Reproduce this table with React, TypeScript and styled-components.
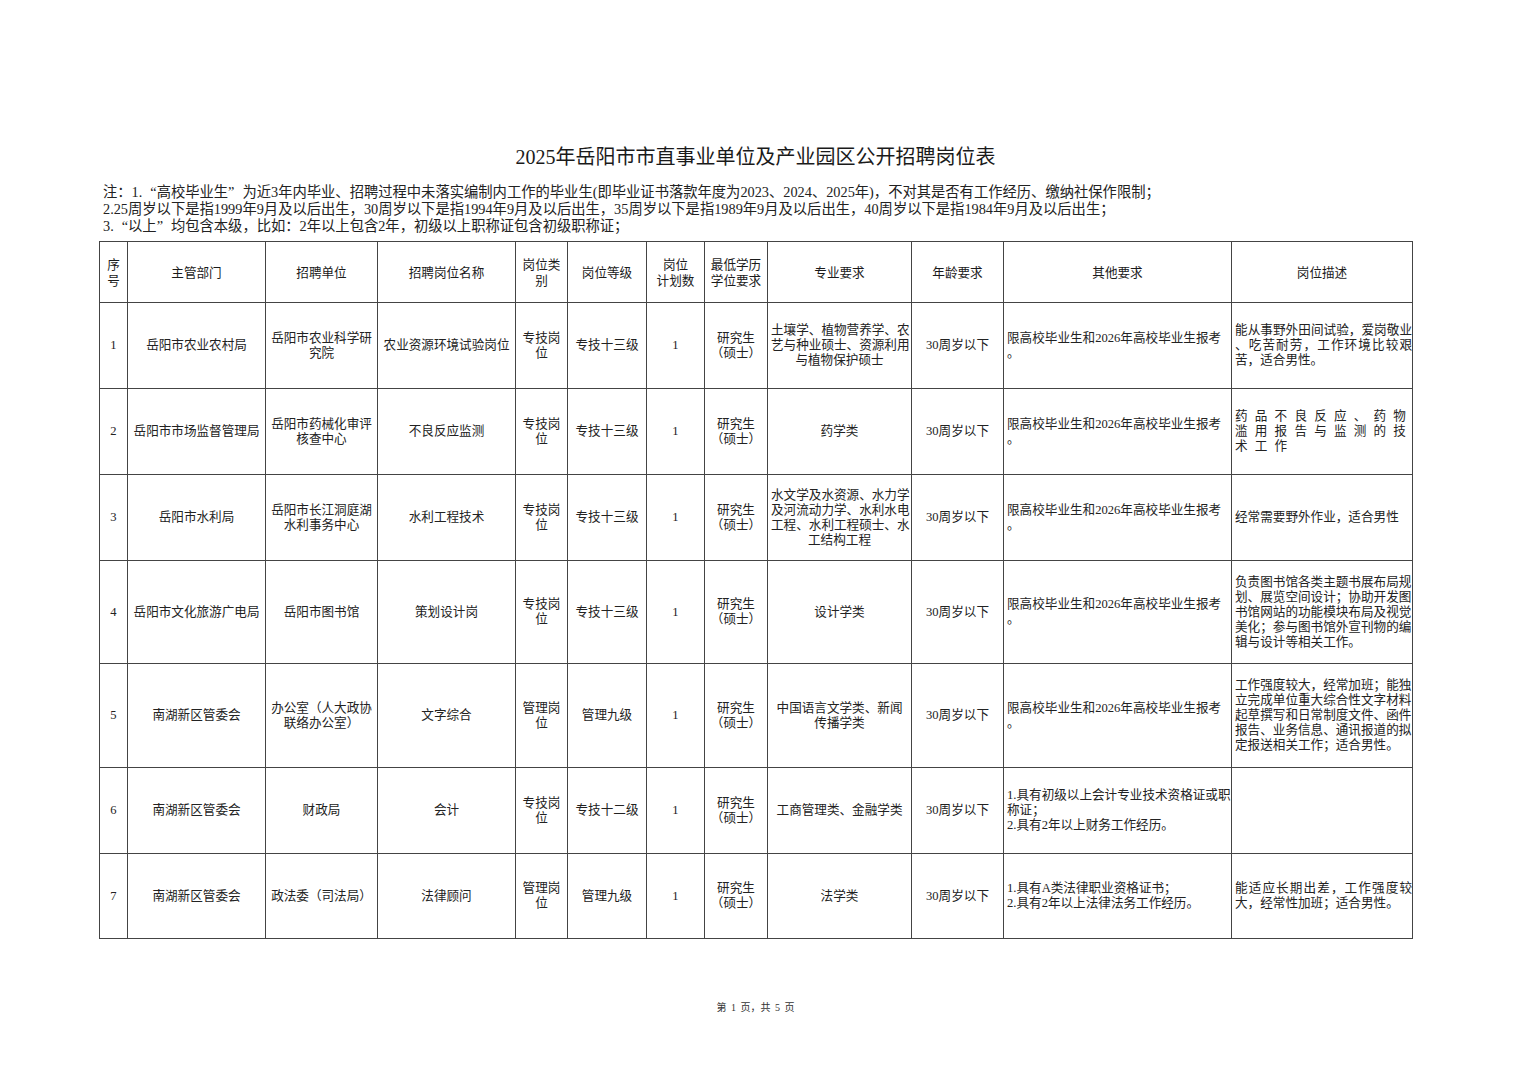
import React from 'react';
import styled, { createGlobalStyle } from 'styled-components';

const GlobalStyle = createGlobalStyle`
  html, body {
    margin: 0;
    padding: 0;
    background: #fff;
  }
  body {
    font-family: "Liberation Serif", "Noto Sans CJK SC", serif;
    color: #222;
  }
`;

const Page = styled.div`
  width: 1528px;
  min-height: 1080px;
  padding: 145px 0 0 99px;
  box-sizing: border-box;
`;

const Title = styled.h1`
  width: 1313px;
  margin: 0;
  height: 24px;
  line-height: 24px;
  text-align: center;
  font-size: 20px;
  font-weight: 400;
  color: #1a1a1a;
  font-family: "Liberation Serif", "Noto Sans CJK SC", serif;
`;

const Notes = styled.div`
  margin-top: 15px;
  padding-left: 4px;
  font-size: 14.3px;
  line-height: 17px;
  color: #222;
  white-space: nowrap;
`;

const Quote = styled.span<{ $open?: boolean }>`
  display: inline-block;
  width: 1em;
  text-align: ${(p) => (p.$open ? 'right' : 'left')};
`;

const Table = styled.table`
  margin-top: 6px;
  width: 1313px;
  border-collapse: collapse;
  table-layout: fixed;
  border: 1.5px solid #333;
`;

const HeadCell = styled.th`
  border: 1px solid #444;
  padding: 0 2px;
  font-size: 12.6px;
  line-height: 16px;
  font-weight: 400;
  font-family: "Noto Sans CJK SC", sans-serif;
  color: #1a1a1a;
  text-align: center;
  vertical-align: middle;
`;

const Cell = styled.td<{ $left?: boolean }>`
  border: 1px solid #444;
  padding: ${(p) => (p.$left ? '0 0 0 3px' : '0 3px')};
  font-size: 12.6px;
  line-height: 15px;
  color: #222;
  text-align: ${(p) => (p.$left ? 'left' : 'center')};
  vertical-align: middle;
  overflow: visible;
`;

const Line = styled.div<{ $justify?: boolean; $spaced?: boolean }>`
  white-space: ${(p) => (p.$justify ? 'normal' : 'nowrap')};
  text-align: inherit;
  text-align-last: ${(p) => (p.$justify ? 'justify' : 'auto')};
  letter-spacing: ${(p) => (p.$spaced ? '7.2px' : 'normal')};
`;

const Footer = styled.div`
  width: 1313px;
  margin-top: 62px;
  text-align: center;
  font-size: 10px;
  line-height: 14px;
  color: #333;
  word-spacing: 2px;
`;

type Row = {
  no: string;
  dept: string[];
  unit: string[];
  post: string[];
  type: string[];
  level: string[];
  edu: string[];
  major: string[];
  other: string[];
  desc: string[];
  justified?: number;
  spaced?: boolean;
  h: number;
};

const limit = ['限高校毕业生和2026年高校毕业生报考', '。'];
const grad = ['研究生', '（硕士）'];

const rows: Row[] = [
  {
    no: '1',
    dept: ['岳阳市农业农村局'],
    unit: ['岳阳市农业科学研', '究院'],
    post: ['农业资源环境试验岗位'],
    type: ['专技岗', '位'],
    level: ['专技十三级'],
    edu: grad,
    major: ['土壤学、植物营养学、农', '艺与种业硕士、资源利用', '与植物保护硕士'],
    other: limit,
    desc: ['能从事野外田间试验，爱岗敬业', '、吃苦耐劳，工作环境比较艰', '苦，适合男性。'],
    justified: 2,
    h: 86,
  },
  {
    no: '2',
    dept: ['岳阳市市场监督管理局'],
    unit: ['岳阳市药械化审评', '核查中心'],
    post: ['不良反应监测'],
    type: ['专技岗', '位'],
    level: ['专技十三级'],
    edu: grad,
    major: ['药学类'],
    other: limit,
    desc: ['药品不良反应、药物', '滥用报告与监测的技', '术工作'],
    spaced: true,
    h: 86,
  },
  {
    no: '3',
    dept: ['岳阳市水利局'],
    unit: ['岳阳市长江洞庭湖', '水利事务中心'],
    post: ['水利工程技术'],
    type: ['专技岗', '位'],
    level: ['专技十三级'],
    edu: grad,
    major: ['水文学及水资源、水力学', '及河流动力学、水利水电', '工程、水利工程硕士、水', '工结构工程'],
    other: limit,
    desc: ['经常需要野外作业，适合男性'],
    h: 86,
  },
  {
    no: '4',
    dept: ['岳阳市文化旅游广电局'],
    unit: ['岳阳市图书馆'],
    post: ['策划设计岗'],
    type: ['专技岗', '位'],
    level: ['专技十三级'],
    edu: grad,
    major: ['设计学类'],
    other: limit,
    desc: [
      '负责图书馆各类主题书展布局规',
      '划、展览空间设计；协助开发图',
      '书馆网站的功能模块布局及视觉',
      '美化；参与图书馆外宣刊物的编',
      '辑与设计等相关工作。',
    ],
    h: 103,
  },
  {
    no: '5',
    dept: ['南湖新区管委会'],
    unit: ['办公室（人大政协', '联络办公室）'],
    post: ['文字综合'],
    type: ['管理岗', '位'],
    level: ['管理九级'],
    edu: grad,
    major: ['中国语言文学类、新闻', '传播学类'],
    other: limit,
    desc: [
      '工作强度较大，经常加班；能独',
      '立完成单位重大综合性文字材料',
      '起草撰写和日常制度文件、函件',
      '报告、业务信息、通讯报道的拟',
      '定报送相关工作；适合男性。',
    ],
    h: 104,
  },
  {
    no: '6',
    dept: ['南湖新区管委会'],
    unit: ['财政局'],
    post: ['会计'],
    type: ['专技岗', '位'],
    level: ['专技十二级'],
    edu: grad,
    major: ['工商管理类、金融学类'],
    other: ['1.具有初级以上会计专业技术资格证或职', '称证；', '2.具有2年以上财务工作经历。'],
    desc: [],
    h: 86,
  },
  {
    no: '7',
    dept: ['南湖新区管委会'],
    unit: ['政法委（司法局）'],
    post: ['法律顾问'],
    type: ['管理岗', '位'],
    level: ['管理九级'],
    edu: grad,
    major: ['法学类'],
    other: ['1.具有A类法律职业资格证书；', '2.具有2年以上法律法务工作经历。'],
    desc: ['能适应长期出差，工作强度较', '大，经常性加班；适合男性。'],
    justified: 1,
    h: 85,
  },
];

const widths = [28, 138, 112, 138, 52, 79, 58, 63, 144, 92, 228, 181];

const headers: string[][] = [
  ['序', '号'],
  ['主管部门'],
  ['招聘单位'],
  ['招聘岗位名称'],
  ['岗位类', '别'],
  ['岗位等级'],
  ['岗位', '计划数'],
  ['最低学历', '学位要求'],
  ['专业要求'],
  ['年龄要求'],
  ['其他要求'],
  ['岗位描述'],
];

const Lines = ({ items, justified = 0, spaced }: { items: string[]; justified?: number; spaced?: boolean }) => (
  <>
    {items.map((t, i) => (
      <Line key={i} $justify={i < justified} $spaced={spaced}>
        {t}
      </Line>
    ))}
  </>
);

const App = () => {
  return (
    <Page>
      <GlobalStyle />
      <Title>2025年岳阳市市直事业单位及产业园区公开招聘岗位表</Title>
      <Notes>
        <div>
          注：1.<Quote $open>“</Quote>高校毕业生<Quote>”</Quote>为近3年内毕业、招聘过程中未落实编制内工作的毕业生(即毕业证书落款年度为2023、2024、2025年)，不对其是否有工作经历、缴纳社保作限制；
        </div>
        <div>
          2.25周岁以下是指1999年9月及以后出生，30周岁以下是指1994年9月及以后出生，35周岁以下是指1989年9月及以后出生，40周岁以下是指1984年9月及以后出生；
        </div>
        <div>
          3.<Quote $open>“</Quote>以上<Quote>”</Quote>均包含本级，比如：2年以上包含2年，初级以上职称证包含初级职称证；
        </div>
      </Notes>
      <Table>
        <colgroup>
          {widths.map((w, i) => (
            <col key={i} style={{ width: w }} />
          ))}
        </colgroup>
        <thead>
          <tr style={{ height: 61 }}>
            {headers.map((h, i) => (
              <HeadCell key={i}>
                <Lines items={h} />
              </HeadCell>
            ))}
          </tr>
        </thead>
        <tbody>
          {rows.map((r) => (
            <tr key={r.no} style={{ height: r.h }}>
              <Cell>{r.no}</Cell>
              <Cell><Lines items={r.dept} /></Cell>
              <Cell><Lines items={r.unit} /></Cell>
              <Cell><Lines items={r.post} /></Cell>
              <Cell><Lines items={r.type} /></Cell>
              <Cell><Lines items={r.level} /></Cell>
              <Cell>1</Cell>
              <Cell><Lines items={r.edu} /></Cell>
              <Cell><Lines items={r.major} /></Cell>
              <Cell>30周岁以下</Cell>
              <Cell $left><Lines items={r.other} /></Cell>
              <Cell $left>
                <Lines items={r.desc} justified={r.justified} spaced={r.spaced} />
              </Cell>
            </tr>
          ))}
        </tbody>
      </Table>
      <Footer>第 1 页，共 5 页</Footer>
    </Page>
  );
};

export default App;
